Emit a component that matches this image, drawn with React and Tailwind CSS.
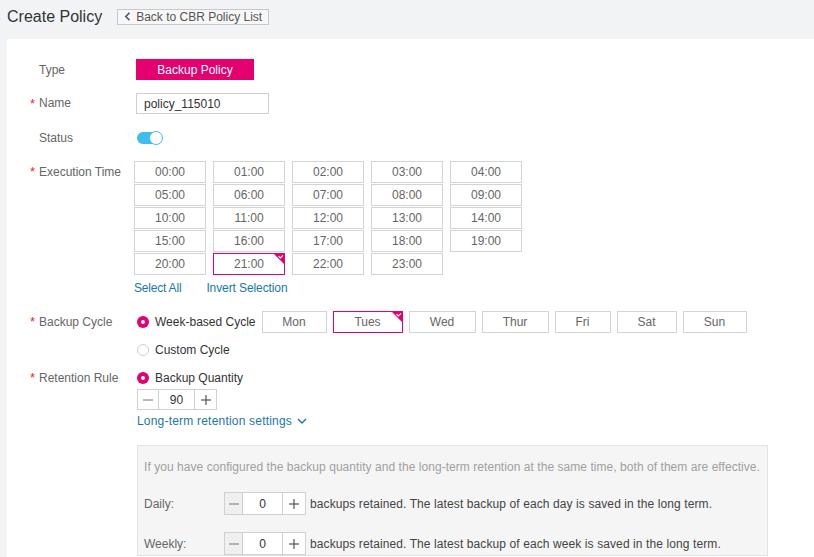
import React from "react";

const PINK = "#e4006f";

function Label({ req, children, className = "" }) {
  return (
    <div className={`w-[129px] shrink-0 pl-[23px] flex text-[12px] text-[#666] ${className}`}>
      <span className="w-[9px] text-[#f5222d] text-[13px] leading-[inherit]">{req ? "*" : ""}</span>
      <span>{children}</span>
    </div>
  );
}

function Corner() {
  return (
    <span className="absolute top-0 right-0 w-[10px] h-[10px]">
      <svg width="10" height="10" viewBox="0 0 10 10" className="block">
        <polygon points="0,0 10,0 10,10" fill={PINK} />
        <polyline points="4.5,2.2 6.3,4 9,1.3" fill="none" stroke="#fff" strokeWidth="1.1" />
      </svg>
    </span>
  );
}

function Cell({ children, selected, w = "w-[72px]" }) {
  return (
    <div
      className={`relative ${w} h-[22px] flex items-center justify-center text-[12px] text-[#666] bg-white border ${
        selected ? "border-[#e4006f]" : "border-[#d4d4d4]"
      }`}
    >
      {children}
      {selected && <Corner />}
    </div>
  );
}

function Radio({ checked }) {
  return checked ? (
    <span className="w-[12px] h-[12px] rounded-full bg-[#e4006f] flex items-center justify-center">
      <span className="w-[4px] h-[4px] rounded-full bg-white" />
    </span>
  ) : (
    <span className="w-[12px] h-[12px] rounded-full border border-[#cfcfcf] bg-white" />
  );
}

function Stepper({ value, h = "h-[21px]", minusW = "w-[21px]", valW = "w-[36px]", plusW = "w-[22px]", minusBg = "bg-white" }) {
  return (
    <div className={`flex ${h} border border-[#d0d0d0] bg-white text-[12px]`}>
      <div className={`${minusW} ${minusBg} flex items-center justify-center border-r border-[#d0d0d0]`}>
        <svg width="10" height="10" viewBox="0 0 10 10"><line x1="0" y1="5" x2="10" y2="5" stroke="#777" strokeWidth="1" /></svg>
      </div>
      <div className={`${valW} flex items-center justify-center text-[#333]`}>{value}</div>
      <div className={`${plusW} flex items-center justify-center border-l border-[#d0d0d0]`}>
        <svg width="10" height="10" viewBox="0 0 10 10"><line x1="0" y1="5" x2="10" y2="5" stroke="#555" strokeWidth="1.2" /><line x1="5" y1="0" x2="5" y2="10" stroke="#555" strokeWidth="1.2" /></svg>
      </div>
    </div>
  );
}

export default function App() {
  const times = Array.from({ length: 24 }, (_, i) => `${String(i).padStart(2, "0")}:00`);
  const rows = [];
  for (let r = 0; r < 5; r++) rows.push(times.slice(r * 5, r * 5 + 5));
  const days = [
    ["Mon", "w-[65px]"],
    ["Tues", "w-[70px]", true],
    ["Wed", "w-[67px]"],
    ["Thur", "w-[67px]"],
    ["Fri", "w-[56px]"],
    ["Sat", "w-[60px]"],
    ["Sun", "w-[64px]"],
  ];
  return (
    <div className="w-[814px] h-[557px] overflow-hidden bg-[#f2f3f5] font-['Liberation_Sans',Arial,sans-serif]">
      <div className="h-[33px] flex items-center pl-[7px]">
        <span className="text-[16px] text-[#333]">Create Policy</span>
        <button className="ml-[15px] h-[16px] px-[6px] flex items-center gap-[5px] border border-[#c8c8c8] bg-[#f7f7f7] text-[12px] text-[#555]">
          <svg width="7" height="9" viewBox="0 0 7 9"><polyline points="5.5,0.8 1.8,4.5 5.5,8.2" fill="none" stroke="#555" strokeWidth="1.6" /></svg>
          <span>Back to CBR Policy List</span>
        </button>
      </div>
      <div className="mt-[6px] ml-[7px] bg-white h-[600px] pt-[20px]">
        {/* Type */}
        <div className="flex items-center h-[21px]">
          <Label>Type</Label>
          <div className="w-[118px] h-[21px] bg-[#e4006f] text-white text-[12px] flex items-center justify-center">Backup Policy</div>
        </div>
        {/* Name */}
        <div className="flex items-center h-[21px] mt-[13px]">
          <Label req>Name</Label>
          <div className="w-[133px] h-[21px] border border-[#cfcfcf] flex items-center px-[7px] text-[12px] text-[#333]">policy_115010</div>
        </div>
        {/* Status */}
        <div className="flex items-center h-[21px] mt-[13px]">
          <Label>Status</Label>
          <div className="ml-[1px] relative w-[25px] h-[12px] rounded-full bg-[#3dbdf0]">
            <span className="absolute right-[-1px] top-[-1px] w-[14px] h-[14px] rounded-full bg-white border border-[#3dbdf0]" />
          </div>
        </div>
        {/* Execution time */}
        <div className="flex mt-[13px]">
          <Label req className="leading-[22px]">Execution Time</Label>
          <div className="-ml-[2px]">
            <div className="flex flex-col gap-[1px]">
              {rows.map((row, ri) => (
                <div key={ri} className="flex gap-[7px]">
                  {row.map((t) => (
                    <Cell key={t} selected={t === "21:00"}>{t}</Cell>
                  ))}
                </div>
              ))}
            </div>
            <div className="mt-[6px] flex gap-[25px] text-[12px] text-[#1a78a8] leading-[14px]">
              <span className="tracking-[-0.2px]">Select All</span>
              <span className="tracking-[-0.1px]">Invert Selection</span>
            </div>
          </div>
        </div>
        {/* Backup cycle */}
        <div className="flex mt-[16px]">
          <Label req className="leading-[22px]">Backup Cycle</Label>
          <div>
            <div className="flex items-center h-[22px]">
              <div className="ml-[1px] flex items-center gap-[6px] text-[12px] text-[#333]">
                <Radio checked />
                <span>Week-based Cycle</span>
              </div>
              <div className="ml-[6px] flex gap-[6px]">
                {days.map(([d, w, s]) => (
                  <Cell key={d} w={w} selected={s}>{d}</Cell>
                ))}
              </div>
            </div>
            <div className="mt-[7px] h-[20px] ml-[1px] flex items-center gap-[6px] text-[12px] text-[#333]">
              <Radio />
              <span>Custom Cycle</span>
            </div>
          </div>
        </div>
        {/* Retention */}
        <div className="flex mt-[8px]">
          <Label req className="leading-[20px]">Retention Rule</Label>
          <div>
            <div className="h-[20px] ml-[1px] flex items-center gap-[6px] text-[12px] text-[#333]">
              <Radio checked />
              <span>Backup Quantity</span>
            </div>
            <div className="mt-[1px] ml-[1px] w-fit">
              <Stepper value="90" h="h-[21px]" minusW="w-[21px]" valW="w-[35px]" plusW="w-[22px]" />
            </div>
            <div className="mt-[4px] ml-[1px] flex items-center gap-[5px] text-[12px] text-[#1a78a8] leading-[14px]">
              <span className="tracking-[0.2px]">Long-term retention settings</span>
              <svg width="10" height="7" viewBox="0 0 10 7"><polyline points="1,1 5,5 9,1" fill="none" stroke="#1a78a8" strokeWidth="1.4" /></svg>
            </div>
          </div>
        </div>
        {/* Long-term box */}
        <div className="mt-[17px] ml-[130px] w-[631px] border border-[#e3e3e3] bg-[#f5f5f5] pt-[14px] px-[6px]">
          <div className="text-[12px] leading-[14px] text-[#a0a0a0] tracking-[0.05px] whitespace-nowrap">
            If you have configured the backup quantity and the long-term retention at the same time, both of them are effective.
          </div>
          <div className="mt-[18px] flex items-center">
            <span className="w-[80px] text-[12px] text-[#666]">Daily:</span>
            <Stepper value="0" h="h-[23px]" minusW="w-[18px]" valW="w-[39px]" plusW="w-[23px]" minusBg="bg-[#f0f0f0]" />
            <span className="ml-[4px] text-[12px] text-[#444] tracking-[0.1px]">backups retained. The latest backup of each day is saved in the long term.</span>
          </div>
          <div className="mt-[17px] flex items-center">
            <span className="w-[80px] text-[12px] text-[#666]">Weekly:</span>
            <Stepper value="0" h="h-[23px]" minusW="w-[18px]" valW="w-[39px]" plusW="w-[23px]" minusBg="bg-[#f0f0f0]" />
            <span className="ml-[4px] text-[12px] text-[#444] tracking-[0.1px]">backups retained. The latest backup of each week is saved in the long term.</span>
          </div>
        </div>
      </div>
    </div>
  );
}
